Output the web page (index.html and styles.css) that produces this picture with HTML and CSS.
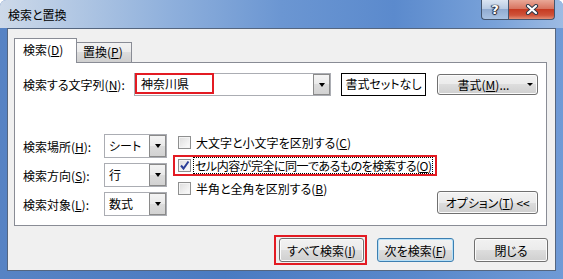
FILE: index.html
```html
<!DOCTYPE html>
<html lang="ja">
<head>
  <meta charset="UTF-8">
  <title>検索と置換</title>
  <link rel="stylesheet" href="styles.css">
</head>
<body>
  <div class="window">
    <div class="titlebar">
      <span class="title">検索と置換</span>
      <div class="caption">
        <span class="cap-btn help">?</span>
        <span class="cap-btn close">
          <svg width="14" height="11" viewBox="0 0 14 11">
            <path d="M3 2 L11 9 M11 2 L3 9" stroke="#2f3a4a" stroke-width="4.2" stroke-linecap="round"/>
            <path d="M3 2 L11 9 M11 2 L3 9" stroke="#fff" stroke-width="2.2" stroke-linecap="round"/>
          </svg>
        </span>
      </div>
    </div>

    <div class="client">
      <div class="tabs">
        <div class="tab active">検索(<u>D</u>)</div>
        <div class="tab">置換(<u>P</u>)</div>
      </div>

      <div class="panel">
        <div class="find-row">
          <label class="find-label">検索する文字列(<u>N</u>):</label>
          <div class="combo">
            <span class="find-value">神奈川県</span>
            <span class="drop"><i class="tri"></i></span>
          </div>
          <div class="fmt-preview">書式セットなし</div>
          <button class="btn fmt-btn">書式(<u>M</u>)...<i class="tri small"></i></button>
        </div>

        <div class="options">
          <div class="fields">
            <label>検索場所(<u>H</u>):</label>
            <div class="select"><span>シート</span><span class="drop"><i class="tri"></i></span></div>
            <label>検索方向(<u>S</u>):</label>
            <div class="select"><span>行</span><span class="drop"><i class="tri"></i></span></div>
            <label>検索対象(<u>L</u>):</label>
            <div class="select"><span>数式</span><span class="drop"><i class="tri"></i></span></div>
          </div>

          <div class="checks">
            <div class="check"><span class="box"></span><span>大文字と小文字を区別する(<u>C</u>)</span></div>
            <div class="check flag">
              <span class="box">
                <svg width="11" height="11" viewBox="0 0 11 11">
                  <path d="M2 5.5 L4.5 8.5 L9.5 1.5" fill="none" stroke="#2b3f98" stroke-width="2"/>
                </svg>
              </span>
              <span class="focus">セル内容が完全に同一であるものを検索する(<u>O</u>)</span>
            </div>
            <div class="check"><span class="box"></span><span>半角と全角を区別する(<u>B</u>)</span></div>
          </div>

          <button class="btn opt-btn">オプション(<u>T</u>) &lt;&lt;</button>
        </div>
      </div>

      <div class="footer">
        <span class="flag-wrap"><button class="btn find-all">すべて検索(<u>I</u>)</button></span>
        <button class="btn find-next">次を検索(<u>F</u>)</button>
        <button class="btn close-btn">閉じる</button>
      </div>
    </div>
  </div>
</body>
</html>
```

FILE: styles.css
```css
* { margin: 0; padding: 0; box-sizing: border-box; }

body {
  background: #fff;
  font-family: "Noto Sans CJK JP", "Noto Sans", sans-serif;
  font-size: 12px;
  color: #000;
  font-feature-settings: "palt";
  white-space: nowrap;
}

u { text-decoration: underline; text-underline-offset: 1px; }

.window {
  width: 563px;
  height: 279px;
  border-radius: 6px 6px 0 0;
  background: linear-gradient(90deg, #5783c4 0%, #4a7bc2 40%, #5a89cc 75%, #6f9ad6 100%);
  display: flex;
  flex-direction: column;
  overflow: hidden;
}

.titlebar {
  height: 28px;
  display: flex;
  align-items: flex-start;
  padding-left: 8px;
  background: linear-gradient(90deg, #cdd9e9 0%, #b4c9e4 12%, #8fb0dc 30%, #6b96d2 50%, #5b8acd 70%, #79a2d9 88%, #9dbbe3 100%);
}

.title {
  margin-top: 7px;
  line-height: 16px;
  font-size: 12px;
  color: #000;
}

.caption {
  margin-left: auto;
  margin-right: 8px;
  display: flex;
}

.cap-btn {
  height: 20px;
  display: flex;
  align-items: center;
  justify-content: center;
  border: 1px solid #44556e;
  border-top: none;
}

.help {
  width: 27px;
  border-radius: 0 0 0 4px;
  border-right: none;
  background: linear-gradient(#dbe5f2 0%, #b9cbe3 45%, #91abd0 50%, #a9c2e2 100%);
  color: #fff;
  font-family: "DejaVu Sans", sans-serif;
  font-weight: bold;
  font-size: 13px;
  text-shadow: 0 0 1px #223, 1px 0 1px #223, -1px 0 1px #223, 0 1px 1px #223;
}

.close {
  width: 47px;
  border-radius: 0 0 4px 0;
  background: linear-gradient(#e9a897 0%, #d87560 45%, #c63b22 50%, #cf5239 80%, #e38f76 100%);
}

.client {
  margin-left: 7px;
  width: 549px;
  height: 243px;
  background: #f0f0f0;
  border: 1px solid #55667f;
  padding: 9px 8px 0 6px;
}

.tabs {
  display: flex;
  align-items: flex-end;
  height: 24px;
}

.tab {
  width: 55px;
  height: 20px;
  padding-left: 6px;
  line-height: 18px;
  border: 1px solid #898c95;
  border-bottom: none;
  border-left: none;
  background: linear-gradient(#f2f2f2 0%, #ebebeb 50%, #dddddd 50%, #cfcfcf 100%);
}

.tab.active {
  width: 63px;
  height: 25px;
  margin-bottom: -1px;
  padding-left: 8px;
  line-height: 22px;
  border-left: 1px solid #898c95;
  background: #fff;
  position: relative;
  z-index: 1;
}

.panel {
  width: 533px;
  height: 164px;
  background: #fff;
  border: 1px solid #898c95;
  padding: 10px 0 0 8px;
  display: flex;
  flex-direction: column;
}

.find-row {
  display: flex;
  align-items: center;
  height: 23px;
}

.find-label { width: 111px; }

.combo {
  width: 197px;
  height: 23px;
  border: 1px solid #abadb3;
  display: flex;
  align-items: stretch;
}

.find-value {
  width: 79px;
  border: 2px solid #e31b23;
  margin: -1px 0 1px 0;
  padding-left: 4px;
  line-height: 17px;
}

.drop {
  margin-left: auto;
  width: 17px;
  border: 1px solid #8a8a8a;
  background: linear-gradient(#f4f4f4 0%, #e9e9e9 50%, #dcdcdc 50%, #d2d2d2 100%);
  display: flex;
  align-items: center;
  justify-content: center;
}

.tri {
  width: 0;
  height: 0;
  border-style: solid;
  border-width: 4px 3.5px 0 3.5px;
  border-color: #000 transparent transparent transparent;
}

.tri.small { border-width: 3px 3px 0 3px; margin-left: 18px; }

.fmt-preview {
  margin-left: 10px;
  width: 85px;
  height: 23px;
  border: 1px solid #000;
  text-align: center;
  line-height: 20px;
}

.btn {
  font: inherit;
  color: #000;
  font-feature-settings: "palt";
  height: 24px;
  border: 1px solid #707070;
  border-radius: 3px;
  background: linear-gradient(#f2f2f2 0%, #ebebeb 50%, #dddddd 50%, #cfcfcf 100%);
  box-shadow: inset 0 0 0 1px #fbfbfb;
  display: flex;
  align-items: center;
  justify-content: center;
}

.fmt-btn {
  margin-left: 11px;
  width: 101px;
  height: 21px;
  padding-left: 16px;
}

.options {
  flex: 1;
  margin-top: 35px;
  display: flex;
  align-items: flex-start;
}

.fields {
  margin-top: 3px;
  display: grid;
  grid-template-columns: 81px 63px;
  grid-auto-rows: 24px;
  row-gap: 5px;
  align-items: center;
}

.select {
  height: 24px;
  border: 1px solid #abadb3;
  display: flex;
  align-items: stretch;
}

.select span:first-child {
  padding-left: 4px;
  line-height: 21px;
}

.checks {
  margin-left: 6px;
  display: flex;
  flex-direction: column;
  align-items: flex-start;
}

.check {
  height: 23px;
  display: flex;
  align-items: center;
  gap: 5px;
  padding-left: 5px;
}

.check.flag {
  height: 21px;
  margin: 1px 0;
  border: 2px solid #e31b23;
  padding: 0 2px 0 3px;
  gap: 2px;
}

.focus {
  border: 1px dotted #000;
  padding: 0 1px;
  line-height: 15px;
  letter-spacing: -0.5px;
}

.box {
  width: 13px;
  height: 13px;
  border: 1px solid #8e8f8f;
  background: linear-gradient(135deg, #dcdcdc 0%, #f0f0f0 60%, #fdfdfd 100%);
  box-shadow: inset 0 0 0 1px #f4f4f4;
  display: flex;
  align-items: center;
  justify-content: center;
  flex-shrink: 0;
}

.opt-btn {
  margin-left: auto;
  margin-right: 8px;
  align-self: flex-end;
  margin-bottom: 11px;
  width: 101px;
  height: 23px;
}

.footer {
  margin-top: 9px;
  margin-right: -1px;
  display: flex;
  align-items: center;
  justify-content: flex-end;
}

.flag-wrap {
  border: 2px solid #e31b23;
  padding: 1px 1px 1px 3px;
}

.find-all {
  width: 85px;
}

.find-next {
  width: 77px;
  margin-left: 10px;
  border-color: #3c7fb1;
  box-shadow: inset 0 0 0 1px #b6e0f8;
}

.close-btn {
  width: 74px;
  margin-left: 20px;
}
```
